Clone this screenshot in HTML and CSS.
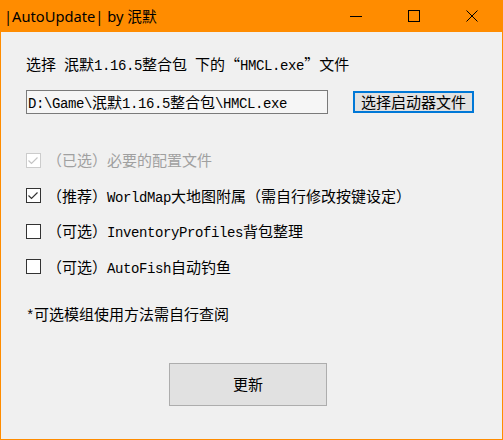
FILE: index.html
```html
<!DOCTYPE html>
<html lang="zh-CN">
<head>
<meta charset="utf-8">
<title>|AutoUpdate| by 泯默</title>
<link rel="stylesheet" href="styles.css">
</head>
<body>
<div class="window">
  <div class="titlebar">
    <div class="title">|AutoUpdate| by 泯默</div>
    <div class="caption">
      <span class="cap-btn"><svg width="12" height="12" viewBox="0 0 12 12"><path d="M0 6.5H12" stroke="#000" stroke-width="1"/></svg></span>
      <span class="cap-btn"><svg width="12" height="12" viewBox="0 0 12 12"><rect x="0.5" y="0.5" width="11" height="11" fill="none" stroke="#000" stroke-width="1"/></svg></span>
      <span class="cap-btn"><svg width="12" height="12" viewBox="0 0 12 12"><path d="M0.5 0.5L11.5 11.5M11.5 0.5L0.5 11.5" stroke="#000" stroke-width="1"/></svg></span>
    </div>
  </div>
  <div class="content">
    <div class="label">选择<span class="en"> </span>泯默<span class="en">1.16.5</span>整合包<span class="en"> </span>下的“<span class="en">HMCL.exe</span>”文件</div>
    <div class="path-row">
      <div class="path-box"><span class="en">D:\Game\</span>泯默<span class="en">1.16.5</span>整合包<span class="en">\HMCL.exe</span></div>
      <div class="pick-btn">选择启动器文件</div>
    </div>
    <div class="options">
      <div class="opt disabled">
        <span class="box"><svg width="13" height="13" viewBox="0 0 13 13"><polyline points="1.5,6.5 4.5,9.5 10.5,3.5" fill="none" stroke="#c4c4c4" stroke-width="1.2"/></svg></span>
        <span class="opt-text">（已选）必要的配置文件</span>
      </div>
      <div class="opt">
        <span class="box"><svg width="13" height="13" viewBox="0 0 13 13"><polyline points="1.5,6.5 4.5,9.5 10.5,3.5" fill="none" stroke="#333" stroke-width="1.2"/></svg></span>
        <span class="opt-text">（推荐）<span class="en">WorldMap</span>大地图附属（需自行修改按键设定）</span>
      </div>
      <div class="opt">
        <span class="box"></span>
        <span class="opt-text">（可选）<span class="en">InventoryProfiles</span>背包整理</span>
      </div>
      <div class="opt">
        <span class="box"></span>
        <span class="opt-text">（可选）<span class="en">AutoFish</span>自动钓鱼</span>
      </div>
    </div>
    <div class="note"><span class="en">*</span>可选模组使用方法需自行查阅</div>
    <div class="update">更新</div>
  </div>
</div>
</body>
</html>
```
FILE: styles.css
```css
* { box-sizing: border-box; }
html, body { margin: 0; padding: 0; }
body { width: 503px; height: 440px; overflow: hidden; background: #f0f0f0; }

.window {
  width: 503px;
  height: 440px;
  border: 1px solid #ff8c00;
  border-top: 0;
  display: flex;
  flex-direction: column;
  background: #f0f0f0;
}

.titlebar {
  height: 32px;
  background: #ff8c00;
  display: flex;
  align-items: stretch;
  flex: none;
}
.title {
  flex: 1;
  padding-left: 3px;
  font-family: "Noto Sans", "Noto Sans CJK SC", sans-serif;
  font-size: 14.7px;
  line-height: 32px;
  color: #000;
  white-space: nowrap;
}
.caption { display: flex; padding-right: 1px; }
.cap-btn {
  width: 58px;
  display: flex;
  align-items: center;
  justify-content: center;
}

.content {
  flex: 1;
  padding-left: 25px;
  font-family: "Noto Sans CJK SC", sans-serif;
  font-size: 15px;
  line-height: 20px;
  color: #000;
  display: flex;
  flex-direction: column;
  align-items: flex-start;
}
.en {
  font-family: "Liberation Mono", monospace;
  font-size: 14px;
  line-height: 1;
  letter-spacing: -0.4px;
}

.label { margin-top: 22px; height: 20px; white-space: nowrap; }

.path-row { display: flex; align-items: center; height: 24px; margin-top: 16px; }
.path-box {
  width: 302px;
  height: 24px;
  border: 1px solid #7a7a7a;
  background: #f6f6f6;
  padding-left: 1px;
  line-height: 22px;
  white-space: nowrap;
}
.pick-btn {
  margin-left: 25px;
  width: 121px;
  height: 22px;
  border: 2px solid #0078d7;
  background: #e1e1e1;
  display: flex;
  align-items: center;
  justify-content: center;
  white-space: nowrap;
}

.options {
  margin-top: 36px;
  display: flex;
  flex-direction: column;
  gap: 15.5px;
}
.opt { display: flex; align-items: center; height: 20px; gap: 6px; white-space: nowrap; }
.box {
  width: 15px;
  height: 15px;
  border: 1px solid #333;
  background: #fff;
  display: flex;
  flex: none;
}
.opt.disabled { color: #a0a0a0; }
.opt.disabled .box { border-color: #cccccc; }

.note { margin-top: 27px; height: 20px; white-space: nowrap; }

.update {
  margin-top: 39px;
  margin-left: 143px;
  width: 158px;
  height: 43px;
  border: 1px solid #adadad;
  background: #e1e1e1;
  display: flex;
  align-items: center;
  justify-content: center;
}
```
